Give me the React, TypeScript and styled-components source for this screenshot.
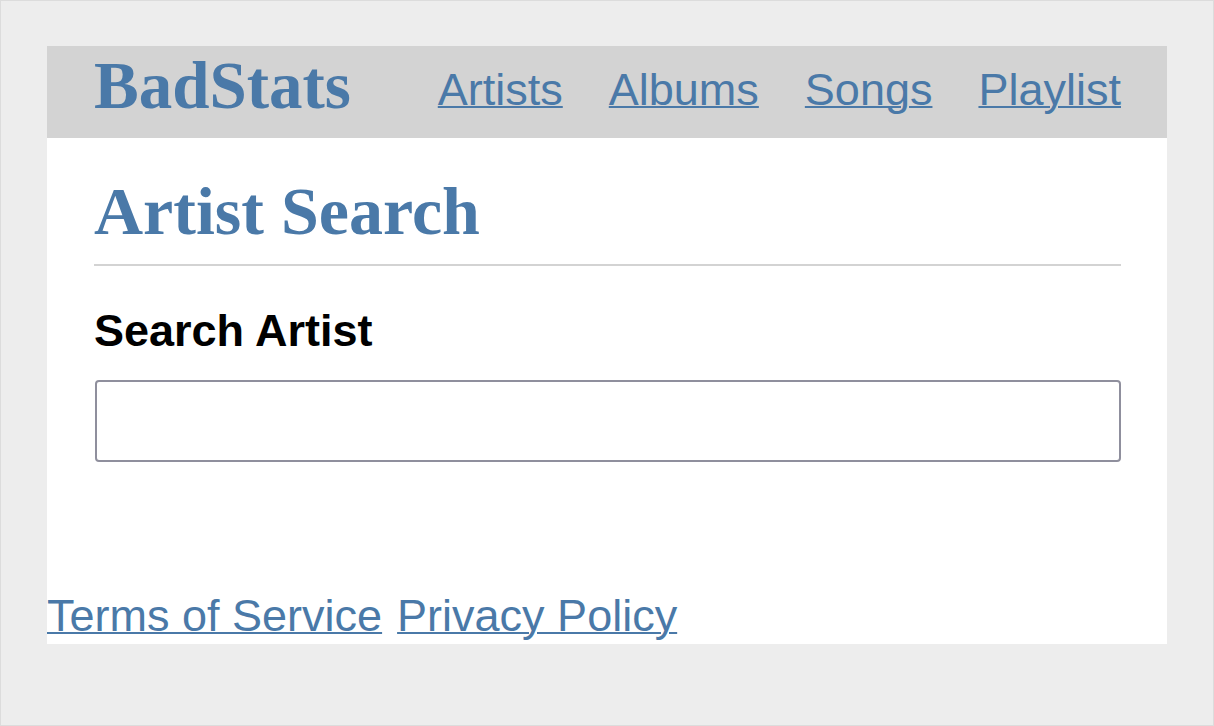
import React from 'react';
import styled, {createGlobalStyle} from "styled-components";

const GlobalStyle = createGlobalStyle`
    html, body {
        margin: 0;
        padding: 0;
        background: #ededed;
    }
    * {
        box-sizing: border-box;
    }
`;

const links = ['Artists', 'Albums', 'Songs', 'Playlist'];

export default function App() {
    return (
        <>
            <GlobalStyle/>
            <Page>
                <Panel>
                    <Header>
                        <Logo>BadStats</Logo>
                        <Nav>
                            {links.map(l => (
                                <NavLink key={l} href="#">{l}</NavLink>
                            ))}
                        </Nav>
                    </Header>
                    <Main>
                        <Title>Artist Search</Title>
                        <Label htmlFor="artist">Search Artist</Label>
                        <SearchInput id="artist" type="text"/>
                    </Main>
                    <Footer>
                        <FooterLink href="#">Terms of Service</FooterLink>
                        <FooterLink href="#">Privacy Policy</FooterLink>
                    </Footer>
                </Panel>
            </Page>
        </>
    );
}

const Page = styled.div`
    min-height: 726px;
    border: 1px solid #dcdcdc;
    padding: 45px 46px;
`;

const Panel = styled.div`
    width: 1120px;
    background: #ffffff;
`;

const Header = styled.header`
    height: 92px;
    background: #d3d3d3;
    padding: 5px 46px 0 47px;
    display: flex;
    align-items: flex-start;
    justify-content: space-between;
`;

const Logo = styled.div`
    font-family: "Liberation Serif", "Times New Roman", serif;
    font-weight: 700;
    font-size: 67px;
    line-height: 68px;
    color: #4a79a8;
`;

const Nav = styled.nav`
    display: flex;
    gap: 46px;
    margin-top: 16px;
`;

const NavLink = styled.a`
    font-family: "Liberation Sans", Arial, sans-serif;
    font-size: 45px;
    line-height: 45px;
    color: #4a79a8;
    text-decoration: underline;
    text-decoration-thickness: 2px;
`;

const Main = styled.main`
    padding: 33px 46px 128px 47px;
`;

const Title = styled.h1`
    margin: 0;
    font-family: "Liberation Serif", "Times New Roman", serif;
    font-weight: 700;
    font-size: 68px;
    line-height: 80px;
    color: #4a79a8;
    padding-bottom: 13px;
    border-bottom: 2px solid #d3d3d3;
`;

const Label = styled.label`
    display: block;
    margin-top: 39px;
    font-family: "Liberation Sans", Arial, sans-serif;
    font-weight: 700;
    font-size: 45px;
    line-height: 52px;
    color: #000000;
`;

const SearchInput = styled.input`
    display: block;
    margin: 23px 0 0 1px;
    width: 1026px;
    height: 82px;
    border: 2px solid #8f8f9d;
    border-radius: 4px;
    background: #ffffff;
    font-size: 32px;
    outline: none;
`;

const Footer = styled.footer`
    display: flex;
    gap: 15px;
    height: 54px;
`;

const FooterLink = styled.a`
    font-family: "Liberation Sans", Arial, sans-serif;
    font-size: 45px;
    line-height: 52px;
    color: #4a79a8;
    text-decoration: underline;
    text-decoration-thickness: 2px;
`;
